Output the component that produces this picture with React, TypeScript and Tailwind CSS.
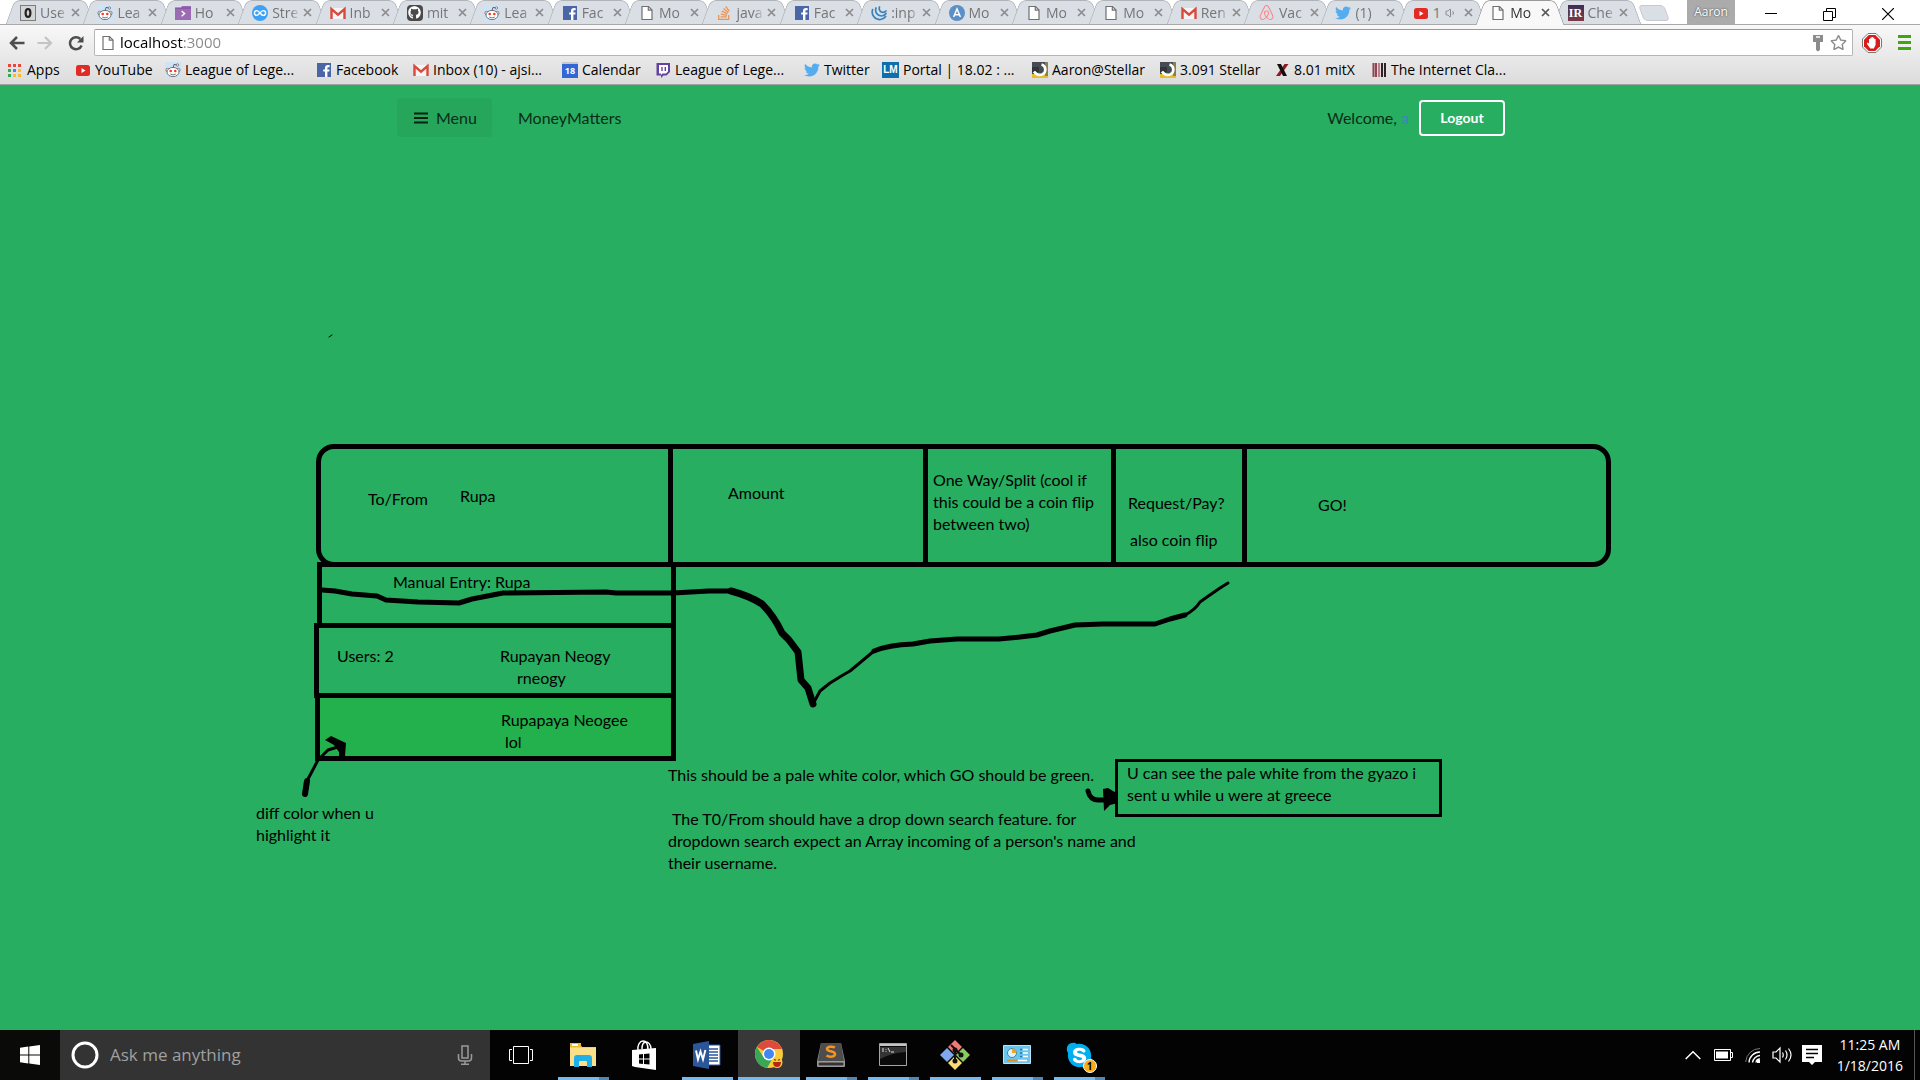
import React from "react";
import { FaStackOverflow, FaTwitter, FaAirbnb, FaGithub, FaSkype, FaRegStar } from "react-icons/fa";
import { Volume1 } from "lucide-react";

/* ---------- favicons ---------- */

const Svg = ({ children, size = 16 }: { children: React.ReactNode; size?: number }) => (
  <svg width={size} height={size} viewBox="0 0 16 16" className="block shrink-0" aria-hidden="true">
    {children}
  </svg>
);

const Zero = () => (
  <Svg>
    <rect x="0.5" y="0.5" width="15" height="15" fill="#d5d5d5" stroke="#7d7d7d" />
    <ellipse cx="8" cy="8" rx="2.4" ry="4" fill="none" stroke="#222" strokeWidth="2.2" />
  </Svg>
);
const Reddit = () => (
  <Svg>
    <rect width="16" height="16" fill="#cfe3f8" />
    <path d="M8 6 L9 2.4 L12 3" fill="none" stroke="#555" strokeWidth="0.9" />
    <circle cx="12.4" cy="3" r="1.2" fill="#fff" stroke="#555" strokeWidth="0.7" />
    <circle cx="2.6" cy="8" r="1.7" fill="#fff" stroke="#555" strokeWidth="0.7" />
    <circle cx="13.4" cy="8" r="1.7" fill="#fff" stroke="#555" strokeWidth="0.7" />
    <ellipse cx="8" cy="10" rx="6" ry="4.6" fill="#fff" stroke="#555" strokeWidth="0.8" />
    <circle cx="5.7" cy="9" r="1.3" fill="#f03c1e" />
    <circle cx="10.3" cy="9" r="1.3" fill="#f03c1e" />
    <path d="M5.2 12 Q8 13.8 10.8 12" fill="none" stroke="#555" strokeWidth="0.8" />
  </Svg>
);
const Purple = () => (
  <Svg>
    <path d="M0 3h6l1-2h9v14H0z" fill="#9b6bb3" />
    <path d="M0 3h16" stroke="#7d4f97" />
    <path d="M6.6 6l3 2.6-3 2.6" fill="none" stroke="#fff" strokeWidth="1.4" />
  </Svg>
);
const Stream = () => (
  <Svg>
    <circle cx="8" cy="8" r="8" fill="#3da2f5" />
    <path d="M8 8C6.6 6 5.6 5.6 4.8 5.6a2.4 2.4 0 000 4.8C6.6 10.4 9 5.6 11.2 5.6a2.4 2.4 0 010 4.8C10.2 10.4 9.2 9.6 8 8z" fill="none" stroke="#fff" strokeWidth="1.4" />
  </Svg>
);
const Gmail = () => (
  <Svg>
    <path d="M1 3h14v11H1z" fill="#f4f4f4" />
    <path d="M1.5 14V4L8 9.6 14.5 4v10" fill="none" stroke="#d9493c" strokeWidth="2.4" />
  </Svg>
);
const Github = () => (
  <span className="flex size-4 shrink-0 items-center justify-center rounded-sm bg-[#4a4a4a] text-white">
    <FaGithub size={13} />
  </span>
);
const Facebook = () => (
  <Svg>
    <rect x="1" y="1" width="14" height="14" fill="#4a66a6" />
    <path d="M9 15V9.6H7.2V7.4H9V6c0-2 1-3 3-3h1.6v2.2h-1.2c-.8 0-1 .3-1 1v1.2h2.2l-.3 2.2h-1.9V15z" fill="#fff" />
  </Svg>
);
const Page = () => (
  <Svg>
    <path d="M3 1.5h6.5L13 5v9.5H3z" fill="#fff" stroke="#707070" strokeWidth="1.2" />
    <path d="M9.3 1.5V5.2H13" fill="none" stroke="#707070" strokeWidth="1.2" />
  </Svg>
);
const Stack = () => <FaStackOverflow size={16} className="shrink-0 text-[#f0924d]" />;
const Jquery = () => (
  <Svg>
    <g fill="none" stroke="#3683bd" strokeWidth="1.7" strokeLinecap="round">
      <path d="M1.6 4.5c-1.6 5 2 10.6 8 10 2.5-.3 4-1.5 5-3" />
      <path d="M5 3c-1.4 4 1.4 8 5.5 8 2 0 3.5-1 4.5-2.5" />
      <path d="M8.5 2c-1 2.6.8 5.4 3.5 5.4 1.5 0 2.4-.6 3-1.5" />
    </g>
  </Svg>
);
const CircleA = () => (
  <Svg>
    <circle cx="8" cy="8" r="8" fill="#5a8fc7" />
    <path d="M4.6 12L8 4l3.4 8M6 9.800h4" fill="none" stroke="#fff" strokeWidth="1.5" />
  </Svg>
);
const Airbnb = () => <FaAirbnb size={17} className="shrink-0 text-[#ff7f83]" />;
const Twitter = () => <FaTwitter size={16} className="shrink-0 text-[#55acee]" />;
const Youtube = () => (
  <Svg>
    <rect x="1" y="3" width="14" height="11" rx="2.5" fill="#e32b26" />
    <path d="M6.5 6l4 2.5-4 2.5z" fill="#fff" />
  </Svg>
);
const Ir = () => (
  <span className="flex size-4 shrink-0 items-center justify-center bg-linear-to-b from-[#3c2d57] to-[#7b3b45] font-['Liberation_Serif'] text-xs leading-4 font-bold text-white">
    IR
  </span>
);
const Apps = () => (
  <Svg>
    {["#e8453c", "#e8453c", "#e8453c", "#34a853", "#4285f4", "#f9bb2d", "#34a853", "#f9bb2d", "#f9bb2d"].map((c, i) => (
      <rect key={i} x={1 + (i % 3) * 5} y={2 + Math.floor(i / 3) * 5} width="3" height="3" fill={c} />
    ))}
  </Svg>
);
const Calendar = () => (
  <span className="flex size-4 shrink-0 items-center justify-center border-t-2 border-[#c8c8c8] bg-[#3367d6] font-['Open_Sans'] text-[9px] leading-3 font-bold text-white">
    18
  </span>
);
const Twitch = () => (
  <Svg>
    <path d="M1.5 1h13.500v9l-3.500 3.500H8.500L6 16v-2.500H1.500z" fill="#6441a4" />
    <path d="M4 3h9v6.500L11 11.500H7.500L6 13v-1.500H4z" fill="#fff" />
    <path d="M7 5v4M10.300 5v4" stroke="#6441a4" strokeWidth="1.4" />
  </Svg>
);
const Lm = () => (
  <span className="flex h-4 w-[17px] shrink-0 items-center justify-center bg-[#0d6fae] font-['Liberation_Sans'] text-[10px] leading-4 font-bold text-white">
    LM
  </span>
);
const Stellar = () => (
  <Svg>
    <rect width="16" height="16" fill="#454b52" />
    <path d="M0 12h16v4H0z" fill="#e3bf2f" />
    <path d="M13 0h3v14h-3z" fill="#8a8048" />
    <path d="M0 5h7v5H0z" fill="#30353a" />
    <path d="M9.500 2.500A5.300 5.300 0 0110 12.500Q5 14 2 9.500" fill="none" stroke="#fff" strokeWidth="2.600" />
  </Svg>
);
const EdX = () => (
  <Svg>
    <path d="M14.500 2h-4L2 14h4z" fill="#8c1d22" />
    <path d="M3 2h4l6 12H9z" fill="#111" />
  </Svg>
);
const Classics = () => (
  <Svg>
    <rect x="1" y="1" width="14" height="14" fill="#e6dada" />
    <path d="M2.500 1v14M5 1v14" stroke="#8f4552" strokeWidth="2" />
    <path d="M8 1v14" stroke="#b98089" strokeWidth="2" />
    <path d="M11 1v14M14 1v14" stroke="#2c2428" strokeWidth="2" />
  </Svg>
);

/* ---------- browser ---------- */

type Tab = { icon: React.FC; label: string; active?: boolean; audio?: boolean };

const tabs: Tab[] = [
  { icon: Zero, label: "Use" },
  { icon: Reddit, label: "Lea" },
  { icon: Purple, label: "Ho" },
  { icon: Stream, label: "Stre" },
  { icon: Gmail, label: "Inb" },
  { icon: Github, label: "mit" },
  { icon: Reddit, label: "Lea" },
  { icon: Facebook, label: "Fac" },
  { icon: Page, label: "Mo" },
  { icon: Stack, label: "java" },
  { icon: Facebook, label: "Fac" },
  { icon: Jquery, label: ":inp" },
  { icon: CircleA, label: "Mo" },
  { icon: Page, label: "Mo" },
  { icon: Page, label: "Mo" },
  { icon: Gmail, label: "Ren" },
  { icon: Airbnb, label: "Vac" },
  { icon: Twitter, label: "(1)" },
  { icon: Youtube, label: "1", audio: true },
  { icon: Page, label: "Mo", active: true },
  { icon: Ir, label: "Che" },
];

const TabItem = ({ icon: Icon, label, active, audio }: Tab) => {
  const fill = active ? "bg-[#f8f8f8] border-[#999]" : "bg-[#dadfe6] border-[#b0b3b8]";
  return (
    <div role="tab" aria-selected={!!active} className={`relative min-w-0 flex-1 ${active ? "z-10 h-[25px]" : "h-6"}`}>
      <span className={`absolute top-0 bottom-0 -left-px w-1/2 -skew-x-[20deg] rounded-tl-md border-t border-l ${fill}`} />
      <span className={`absolute top-0 -right-px bottom-0 w-1/2 skew-x-[20deg] rounded-tr-md border-t border-r ${fill}`} />
      <span className={`absolute inset-x-3 top-px bottom-0 ${active ? "bg-[#f8f8f8]" : "bg-[#dadfe6]"}`} />
      <div className={`relative flex h-[25px] items-center pl-[9px] text-sm ${active ? "text-[#333]" : "text-[#757575]"}`}>
        <Icon />
        <span className={`ml-1 shrink-0 whitespace-nowrap ${audio ? "w-3" : "w-[30px] [mask-image:linear-gradient(90deg,#000_19px,transparent_28px)]"}`}>
          {label}
        </span>
        {audio && <Volume1 size={12} className="mr-[6px] shrink-0 text-[#888]" />}
        <button aria-label={`Close ${label}`} className={`ml-px shrink-0 ${active ? "text-[#555]" : "text-[#8c8c8c]"}`}>
          <svg width="9" height="9" viewBox="0 0 9 9" className="block">
            <path d="M1 1l7 7M8 1l-7 7" stroke="currentColor" strokeWidth="1.7" />
          </svg>
        </button>
      </div>
    </div>
  );
};

const bookmarks: { icon: React.FC; label: string; width: string }[] = [
  { icon: Apps, label: "Apps", width: "w-[68px]" },
  { icon: Youtube, label: "YouTube", width: "w-[90px]" },
  { icon: Reddit, label: "League of Lege...", width: "w-[151px]" },
  { icon: Facebook, label: "Facebook", width: "w-[97px]" },
  { icon: Gmail, label: "Inbox (10) - ajsi...", width: "w-[149px]" },
  { icon: Calendar, label: "Calendar", width: "w-[93px]" },
  { icon: Twitch, label: "League of Lege...", width: "w-[149px]" },
  { icon: Twitter, label: "Twitter", width: "w-[78px]" },
  { icon: Lm, label: "Portal | 18.02 : ...", width: "w-[150px]" },
  { icon: Stellar, label: "Aaron@Stellar", width: "w-[128px]" },
  { icon: Stellar, label: "3.091 Stellar", width: "w-[114px]" },
  { icon: EdX, label: "8.01 mitX", width: "w-[97px]" },
  { icon: Classics, label: "The Internet Cla...", width: "w-[150px]" },
];

const BrowserChrome = () => (
  <header className="shrink-0 font-['Open_Sans',sans-serif] text-sm">
    <div className="flex h-6 bg-white">
      <div role="tablist" className="ml-[11px] flex min-w-0 max-w-[1625px] flex-1">
        {tabs.map((t, i) => (
          <TabItem key={i} {...t} />
        ))}
      </div>
      <button aria-label="New tab" className="mt-[5px] ml-[5px] h-4 w-[26px] skew-x-[20deg] rounded-sm border border-[#c6cad0] bg-[#dadfe6]" />
      <div className="ml-auto flex items-start">
        <button className="h-6 w-12 bg-[#ababab] text-xs text-white [text-shadow:0_0_2px_#333]">Aaron</button>
        <button aria-label="Minimize" className="flex h-7 w-[72px] items-center justify-center">
          <svg width="12" height="12" viewBox="0 0 12 12"><path d="M0 5.500h12" stroke="#000" /></svg>
        </button>
        <button aria-label="Restore" className="flex h-7 w-11 items-center justify-center">
          <svg width="13" height="13" viewBox="0 0 13 13"><path d="M.5 3.500h9v9h-9zM3.500 3V.5h9v9H10" fill="none" stroke="#000" /></svg>
        </button>
        <button aria-label="Close" className="flex h-7 w-[69px] items-center justify-center pl-1">
          <svg width="12" height="12" viewBox="0 0 12 12"><path d="M0 0l12 12M12 0L0 12" stroke="#000" strokeWidth="1.2" /></svg>
        </button>
      </div>
    </div>

    <div className="border-t border-b border-t-[#a9a9a9] border-b-[#a3a3a3] bg-linear-to-b from-[#f8f8f8] to-[#dcdcdc]">
      <div className="flex h-[35px] items-center pr-[9px] pl-[9px]">
        <button aria-label="Back" className="w-7">
          <svg width="16" height="16" viewBox="0 0 16 16"><path d="M15.500 8H2M8 2L2 8l6 6" fill="none" stroke="#4d4d4d" strokeWidth="2.500" /></svg>
        </button>
        <button aria-label="Forward" className="w-[31px]">
          <svg width="16" height="16" viewBox="0 0 16 16"><path d="M.5 8H14M8 2l6 6-6 6" fill="none" stroke="#c4c4c4" strokeWidth="2.200" /></svg>
        </button>
        <button aria-label="Reload" className="w-[26px]">
          <svg width="16" height="16" viewBox="0 0 16 16">
            <path d="M13.600 10.500A6 6 0 1112.300 4" fill="none" stroke="#4d4d4d" strokeWidth="2.500" />
            <path d="M15.500 1v6.500H9z" fill="#4d4d4d" />
          </svg>
        </button>
        <div className="flex h-[27px] flex-1 items-center rounded-xs border border-[#b5b5b5] border-t-[#999] bg-white pr-[5px] pl-[5px]">
          <Page />
          <input
            aria-label="Address"
            defaultValue="localhost:3000"
            className="ml-1 min-w-0 flex-1 bg-[linear-gradient(90deg,#000_63px,#888_63px)] bg-clip-text text-[15px] text-transparent outline-none"
          />
          <svg width="12" height="18" viewBox="0 0 12 18" className="mr-1.5">
            <path d="M1 1h10v7H8v8l-2 1.500L4 16V8H1z" fill="#8c8c8c" />
            <path d="M4 3h4" stroke="#fff" strokeWidth="1.500" />
          </svg>
          <button aria-label="Bookmark this page" className="text-[#8c8c8c]"><FaRegStar size={17} /></button>
        </div>
        <button aria-label="Ad blocker" className="ml-[9px]">
          <svg width="20" height="20" viewBox="0 0 20 20" className="block">
            <path d="M6 .5h8L19.500 6v8L14 19.500H6L.5 14V6z" fill="#fff" stroke="#777" />
            <path d="M6.700 2h6.600L18 6.700v6.600L13.300 18H6.700L2 13.300V6.700z" fill="#d81b1b" />
            <path d="M5.500 9.500l1.500.8V6h1.300V4.800h1.300V4H11v.8h1.300V6h1.300v6l-1.800 3.500H8.300L5 11z" fill="#fff" />
          </svg>
        </button>
        <button aria-label="Chrome menu" className="ml-4 flex w-[13px] flex-col gap-[3px]">
          <span className="h-[3px] bg-[#3fa60c]" />
          <span className="h-[3px] bg-[#3fa60c]" />
          <span className="h-[3px] bg-[#3fa60c]" />
        </button>
      </div>
      <nav aria-label="Bookmarks" className="flex h-6 items-start pl-[7px]">
        {bookmarks.map(({ icon: Icon, label, width }, i) => (
          <a key={i} href="#" className={`flex h-5 shrink-0 items-center gap-1 whitespace-nowrap text-black ${width}`}>
            <Icon />
            {label}
          </a>
        ))}
      </nav>
    </div>
  </header>
);

/* ---------- page ---------- */

const Scribbles = () => (
  <svg className="pointer-events-none absolute top-0 left-0 h-full w-full" aria-hidden="true">
    <g transform="translate(0 -85)" fill="none" stroke="#000" strokeLinejoin="round" strokeLinecap="round">
      <path d="M329 337l3-2" strokeWidth="1" />
      <path d="M322 590L335 591 352 594 377 596 386 600 418 602 459 603 472 599 503 593 606 592 616 593 673 593 709 591 731 591" strokeWidth="5" />
      <path d="M731 591Q750 596 762 604Q774 616 782 633L789 640 798 652 801 680 808 688 813 704" strokeWidth="7" />
      <path d="M813 704L820 691 830 683 843 675 850 671 862 661 874 651" strokeWidth="3" />
      <path d="M874 651Q888 645 913 644L930 641 957 639 999 639 1020 637 1037 635 1050 631 1075 625 1103 624 1155 624 1170 619 1185 615" strokeWidth="5" />
      <path d="M1185 615Q1195 610 1200 602L1207 597 1220 588 1228 583" strokeWidth="3" />
      <path d="M305 794L307 781" strokeWidth="6" />
      <path d="M307 781L318 760 328 750 341 746" strokeWidth="3" />
      <path d="M325 740L331 736 346 743 345 756 339 761 339 752 334 745z" fill="#000" stroke="none" />
      <path d="M1088 791Q1090 800 1098 800L1107 800" strokeWidth="5" />
      <path d="M1103 789L1108 788 1118 794 1118 803 1110 805 1104 811z" fill="#000" stroke="none" />
    </g>
  </svg>
);

const AppPage = () => (
  <main className="relative flex-1 bg-[#27ae60] font-['Lato',sans-serif] text-base text-black">
    <nav className="mr-[415px] ml-[397px] flex items-center pt-[13px] text-[#0b2c19]">
      <button className="flex h-[39px] w-[95px] items-center rounded bg-[#26a65b] pl-[17px]">
        <svg width="14" height="12" viewBox="0 0 14 12" className="mr-[8px]"><path d="M0 1.500h14M0 6h14M0 10.500h14" stroke="#062112" strokeWidth="2.200" /></svg>
        Menu
      </button>
      <a href="#" className="ml-[26px]">MoneyMatters</a>
      <span className="mr-[10px] ml-auto">
        Welcome, <a href="#" className="text-[#4183c4]">a</a>
      </span>
      <button className="h-9 w-[86px] rounded border-2 border-white text-sm font-bold text-white">Logout</button>
    </nav>

    <section className="mt-[307px] mr-[309px] ml-[316px] leading-[22px]">
      <div className="grid h-[123px] grid-cols-[352fr_255fr_188fr_131fr_359fr] rounded-[18px] border-[5px] border-black">
        <div className="flex items-start border-r-5 border-black pt-9 pl-[47px]">
          <span className="mt-[3px] w-[92px]">To/From</span>
          <span>Rupa</span>
        </div>
        <div className="border-r-5 border-black pt-[33px] pl-[55px]">Amount</div>
        <div className="border-r-5 border-black pt-5 pl-[5px] whitespace-nowrap">
          One Way/Split (cool if
          <br />
          this could be a coin flip
          <br />
          between two)
        </div>
        <div className="border-r-5 border-black pt-[43px] pl-3 whitespace-nowrap">
          Request/Pay?
          <p className="mt-[15px] pl-[2px]">also coin flip</p>
        </div>
        <button className="flex pt-[45px] pl-[71px] text-left">GO!</button>
      </div>

      <div className="-mt-[5px] -ml-[2px] w-[362px]">
        <div className="ml-[3px] h-[66px] border-[5px] border-black pt-1 pl-[71px]">Manual Entry: Rupa</div>
        <div className="-mt-[5px] flex h-[75px] border-[5px] border-black pt-[17px] pl-[18px]">
          <span className="w-[163px]">Users: 2</span>
          <span>
            Rupayan Neogy
            <br />
            <span className="pl-[17px]">rneogy</span>
          </span>
        </div>
        <div className="-mt-[5px] ml-px h-[68px] border-[5px] border-black bg-[#22b14c] pt-[11px] pl-[181px]">
          Rupapaya Neogee
          <br />
          <span className="pl-1">lol</span>
        </div>
      </div>
    </section>

    <p className="absolute top-[717px] left-[256px] leading-[22px]">
      diff color when u
      <br />
      highlight it
    </p>
    <div className="absolute top-[679px] left-[668px] leading-[22px] whitespace-nowrap">
      <p>This should be a pale white color, which GO should be green.</p>
      <p className="mt-[22px]">
        <span className="pl-1">The T0/From should have a drop down search feature. for</span>
        <br />
        dropdown search expect an Array incoming of a person's name and
        <br />
        their username.
      </p>
    </div>
    <p className="absolute top-[674px] left-[1115px] h-[58px] w-[327px] border-3 border-black pl-[9px] leading-[22px] whitespace-nowrap">
      U can see the pale white from the gyazo i
      <br />
      sent u while u were at greece
    </p>
    <Scribbles />
  </main>
);

/* ---------- taskbar ---------- */

const FolderIcon = () => (
  <svg width="28" height="26" viewBox="0 0 28 26">
    <path d="M1 2h10l2 3h14v19H1z" fill="#f5cf5b" />
    <path d="M1 1h11v4H1z" fill="#efb92f" />
    <path d="M3 2h6v2H3z" fill="#fff" />
    <path d="M1 6h26v18H1z" fill="#fbe08a" />
    <path d="M5 25V16q0-3 3-3h12q3 0 3 3v9h-5v-5q0-1-1-1h-6q-1 0-1 1v5z" fill="#1fb0ea" />
  </svg>
);
const StoreIcon = () => (
  <svg width="28" height="30" viewBox="0 0 28 30">
    <path d="M1 10l24-2v22L4 27 1 26z" fill="#fff" />
    <path d="M7 11c-1-6 2-10 5-10s5 3 5 9M11 9c0-5 2-7 4-7s5 2 5 7" fill="none" stroke="#fff" strokeWidth="1.500" />
    <path d="M8 14.500l4-.5v4.500H8zM13 14l5.500-.6v5.100H13zM8 19.500h4V24l-4-.5zM13 19.500h5.500v5.100L13 24z" fill="#000" />
  </svg>
);
const WordIcon = () => (
  <svg width="28" height="28" viewBox="0 0 28 28">
    <path d="M14 4h13v20H14z" fill="#fff" stroke="#2b579a" />
    <path d="M16 8h9M16 11h9M16 14h9M16 17h9M16 20h9" stroke="#2b579a" strokeWidth="1.500" />
    <path d="M0 3l16-3v28L0 25z" fill="#2b579a" />
    <path d="M3 9.500l2 9 2.500-8 2.500 8 2.400-9.400" fill="none" stroke="#fff" strokeWidth="1.900" />
  </svg>
);
const ChromeIcon = () => (
  <svg width="28" height="30" viewBox="0 0 28 30">
    <circle cx="14" cy="14" r="14" fill="#f8cb3c" />
    <path d="M14 14L1.900 7A14 14 0 0126.100 7L27 9H14z" fill="#dd4b3e" />
    <path d="M1.900 7A14 14 0 0012 27.900L19 16 8.500 17z" fill="#3aa757" />
    <circle cx="14" cy="14" r="6.500" fill="#fff" />
    <circle cx="14" cy="14" r="5" fill="#4285f4" />
    <circle cx="22" cy="22.500" r="5.500" fill="#fbc92c" />
    <path d="M18 22h8q0 5-4 5t-4-5z" fill="#b6251c" />
    <path d="M19 19.500l2 .8M25 19.500l-2 .8" stroke="#5c3b00" strokeWidth="1.200" />
  </svg>
);
const SublimeIcon = () => (
  <svg width="28" height="26" viewBox="0 0 28 26">
    <path d="M4 1h20l4 18v5q0 1-1 1H1q-1 0-1-1v-5z" fill="#8b8b8b" />
    <path d="M4 1h20l3 18H1z" fill="#4d4d4d" />
    <path d="M1 20h26v4H1z" fill="#333" stroke="#a8a8a8" />
    <path d="M18 5.500c-3-1.500-8-1-8 1.500 0 3 8 1.500 8 5 0 3-5.500 3.500-8.500 1.500" fill="none" stroke="#f79421" strokeWidth="2.500" />
  </svg>
);
const CmdIcon = () => (
  <svg width="28" height="24" viewBox="0 0 28 24">
    <path d="M.5.5h27v22H.5z" fill="#0a0a0a" stroke="#a5a5a5" />
    <path d="M1 1h26v2H1z" fill="#c4c4c4" />
    <path d="M1 4h26v5Q12 10 1 16z" fill="#343434" />
    <path d="M3 6h2M3 8h2M7 6v.8M7 8v.8M9 5l2 4M12 9h3" stroke="#ddd" />
  </svg>
);
const GitIcon = () => (
  <svg width="30" height="30" viewBox="0 0 30 30">
    <path d="M15 0l7 7-7 7-7-7z" fill="#ef7b76" />
    <path d="M23 8l7 7-7 7-7-7z" fill="#8cc95f" />
    <path d="M7 8l7 7-7 7-7-7z" fill="#7fa8ee" />
    <path d="M15 16l7 7-7 7-7-7z" fill="#f8de70" />
    <path d="M11 5l4 4v13M15 9l6 6" fill="none" stroke="#111" strokeWidth="2" />
    <circle cx="15" cy="10" r="2.500" fill="#111" />
    <circle cx="15" cy="21" r="2.500" fill="#111" />
    <circle cx="21" cy="15" r="2.500" fill="#111" />
  </svg>
);
const PanelIcon = () => (
  <svg width="28" height="20" viewBox="0 0 28 20">
    <path d="M.5.500h27v18H.5z" fill="#6cc4ec" stroke="#b9e6fa" />
    <circle cx="9" cy="8" r="4.500" fill="#dff3fc" stroke="#2b88b8" />
    <path d="M9 8V3.500A4.500 4.500 0 0113.500 8z" fill="#f0a429" />
    <path d="M17 4.500h2M17 8h2M17 11.500h2" stroke="#1f78aa" strokeWidth="1.500" />
    <path d="M20 4.500h5M20 8h5M20 11.500h5" stroke="#fff" strokeWidth="1.500" />
    <path d="M4 15.500h10" stroke="#e78a1c" strokeWidth="1.500" />
    <path d="M15 15.500h9" stroke="#fff" strokeWidth="1.500" />
  </svg>
);
const SkypeIcon = () => (
  <span className="relative block text-[#00aff0]">
    <span className="absolute inset-1 rounded-full bg-white" />
    <FaSkype size={29} className="relative" />
    <span className="absolute -right-[3px] -bottom-[3px] flex size-[14px] items-center justify-center rounded-full border border-white bg-[#fbab18] text-[10px] leading-3 font-bold text-black">
      1
    </span>
  </span>
);
const TaskViewIcon = () => (
  <svg width="24" height="20" viewBox="0 0 24 20">
    <path d="M4.500 1.500h15v17h-15zM3 4.500H.5v11H3M21 4.500h2.500v11H21" fill="none" stroke="#fff" />
  </svg>
);

const apps: { name: string; icon: React.FC; open?: boolean; stacked?: boolean; active?: boolean }[] = [
  { name: "Task View", icon: TaskViewIcon },
  { name: "File Explorer", icon: FolderIcon, open: true, stacked: true },
  { name: "Store", icon: StoreIcon },
  { name: "Word", icon: WordIcon, open: true },
  { name: "Chrome", icon: ChromeIcon, open: true, active: true },
  { name: "Sublime Text", icon: SublimeIcon, open: true, stacked: true },
  { name: "Command Prompt", icon: CmdIcon, open: true, stacked: true },
  { name: "Git", icon: GitIcon, open: true },
  { name: "Control Panel", icon: PanelIcon, open: true, stacked: true },
  { name: "Skype", icon: SkypeIcon, open: true, stacked: true },
];

const Taskbar = () => (
  <footer className="flex h-[50px] shrink-0 bg-[#030303] font-['Open_Sans',sans-serif] text-white">
    <button aria-label="Start" className="flex w-[60px] items-center justify-center bg-[#0a0b08]">
      <svg width="20" height="20" viewBox="0 0 20 20">
        <path d="M0 2.800l8.300-1.200v8H0zM9.300 1.500L20 0v9.600H9.300zM0 10.500h8.300v8L0 17.300zM9.300 10.500H20V20L9.300 18.600z" fill="#fff" />
      </svg>
    </button>
    <label className="flex w-[430px] items-center bg-[#333] pr-[17px] pl-[11px]">
      <svg width="28" height="28" viewBox="0 0 28 28" aria-hidden="true"><circle cx="14" cy="14" r="12" fill="none" stroke="#fff" strokeWidth="3" /></svg>
      <input aria-label="Search" placeholder="Ask me anything" className="ml-[11px] min-w-0 flex-1 text-[17px] outline-none placeholder:text-[#a0a0a0]" />
      <svg width="16" height="20" viewBox="0 0 16 20" aria-hidden="true">
        <path d="M5 1h6v12H5zM1.500 9v4q0 3 3 3h7q3 0 3-3V9M8 16v3M4 19.200h8" fill="none" stroke="#9a9a9a" strokeWidth="1.500" />
      </svg>
    </label>
    {apps.map(({ name, icon: Icon, open, stacked, active }) => (
      <button key={name} aria-label={name} className={`flex w-[62px] flex-col items-center ${active ? "bg-[#383838]" : ""}`}>
        <span className="flex h-[47px] items-center justify-center pt-[3px]">
          <Icon />
        </span>
        {open && (
          <span className={`flex h-[3px] bg-[#76b9ed] ${active ? "w-full" : "w-[51px]"}`}>
            {stacked && <span className="ml-auto w-[10px] bg-[#5386b0]" />}
          </span>
        )}
      </button>
    ))}
    <div className="ml-auto flex items-center">
      <svg width="16" height="10" viewBox="0 0 16 10"><path d="M.7 9L8 1.700 15.300 9" fill="none" stroke="#fff" strokeWidth="1.500" /></svg>
      <svg width="19" height="12" viewBox="0 0 19 12" className="ml-[13px]">
        <path d="M.5.500h16v11H.5zM17 3.500h1.500v5H17" fill="none" stroke="#fff" />
        <path d="M2 2.500h12v7H2z" fill="#fff" />
      </svg>
      <svg width="16" height="16" viewBox="0 0 16 16" className="ml-3">
        <path d="M.7 15A14.300 14.300 0 0115 1.500" fill="none" stroke="#777" />
        <path d="M4 15.500A11 11 0 0115 5M7.500 15.500A8 8 0 0115 8.500M11 15.500a4 4 0 014-3.500" fill="none" stroke="#fff" strokeWidth="1.400" />
        <path d="M12 13h3v3h-3z" fill="#fff" />
      </svg>
      <svg width="21" height="18" viewBox="0 0 21 18" className="ml-[11px]">
        <path d="M1 6h3l4-4v14l-4-4H1z" fill="none" stroke="#fff" strokeWidth="1.200" />
        <path d="M10.500 6.500q1.500 2.500 0 5M13.500 4.500q3 4.500 0 9M16.500 2.500q5 6.500 0 13" fill="none" stroke="#fff" strokeWidth="1.200" />
      </svg>
      <svg width="20" height="20" viewBox="0 0 20 20" className="ml-[9px]">
        <path d="M0 0h20v17h-7l-3 3-3-3H0z" fill="#fff" />
        <path d="M4 4.500h12M4 8.500h12M4 12.500h8" stroke="#000" strokeWidth="1.300" />
      </svg>
      <div className="ml-[15px] text-center text-sm leading-[21px]">
        11:25 AM
        <br />
        1/18/2016
      </div>
      <span className="mr-[5px] ml-[11px] h-[50px] w-px bg-[#555]" />
    </div>
  </footer>
);

export default function App() {
  return (
    <div className="flex min-h-screen flex-col overflow-hidden">
      <BrowserChrome />
      <AppPage />
      <Taskbar />
    </div>
  );
}
